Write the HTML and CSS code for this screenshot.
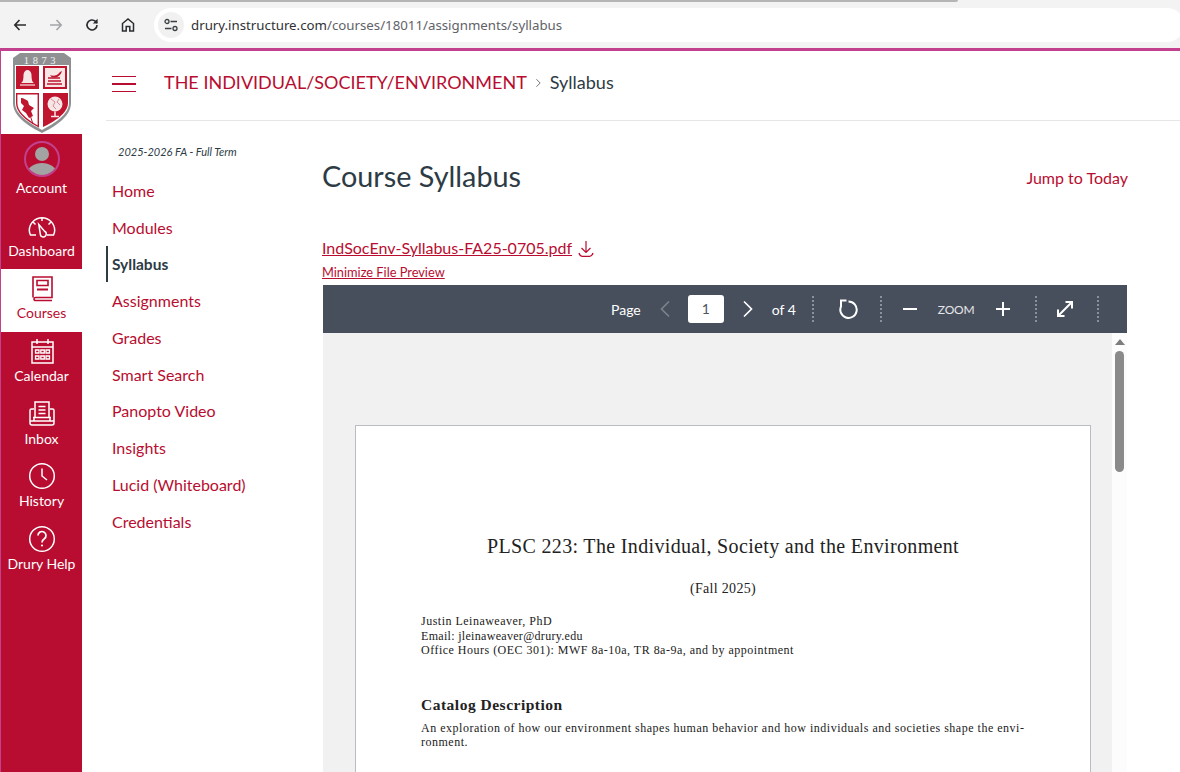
FILE: index.html
```html
<!DOCTYPE html>
<html lang="en">
<head>
   <meta charset="UTF-8">
   <meta name="viewport" content="width=device-width, initial-scale=1.0">
   <title>Course Syllabus</title>
   <link rel="stylesheet" href="styles.css">
</head>
<body>
   <div class="chrome">
       <div class="chrome-tabline"></div>
       <div class="chrome-bar">
           <svg class="chrome-btn" viewBox="0 0 16 16"><path d="M14 8H3M7.500 3 2.800 8l4.700 5" fill="none" stroke="#2a2c2f" stroke-width="1.600"/></svg>
           <svg class="chrome-btn" viewBox="0 0 16 16"><path d="M2 8h11M8.500 3l4.700 5-4.700 5" fill="none" stroke="#a3a5a8" stroke-width="1.600"/></svg>
           <svg class="chrome-btn" viewBox="0 0 16 16"><path d="M13 8a5 5 0 1 1-1.500-3.600L13 6" fill="none" stroke="#2a2c2f" stroke-width="1.600"/><path d="M13.600 1.800v4.800H8.800z" fill="#2a2c2f"/></svg>
           <svg class="chrome-btn" viewBox="0 0 16 16"><path d="M2.500 14V6.500L8 2l5.500 4.500V14H9.800V9.500H6.200V14z" fill="none" stroke="#2a2c2f" stroke-width="1.500"/></svg>
           <div class="omnibox">
               <span class="site-icon">
                   <svg viewBox="0 0 16 16" width="16" height="16"><path d="M7.500 4.500H14M2 11.500h6.500" fill="none" stroke="#3c3f43" stroke-width="1.300"/><circle cx="4" cy="4.500" r="2" fill="none" stroke="#3c3f43" stroke-width="1.300"/><circle cx="12" cy="11.500" r="2" fill="none" stroke="#3c3f43" stroke-width="1.300"/></svg>
               </span>
               <span class="url"><span class="url-host">drury.instructure.com</span>/courses/18011/assignments/syllabus</span>
           </div>
       </div>
   </div>

   <div class="page">
       <nav class="rail">
           <a class="rail-logo" href="#">
               <svg viewBox="0 0 60 82" width="60" height="82">
                   <path d="M1 7 8 2h44l7 5v45c0 14-17 24-29 30C18 76 1 66 1 52z" fill="#8f9092"/>
                   <text x="29.500" y="13" class="logo-year">1873</text>
                   <path d="M3 14h54v38c0 12-16 21-27 27C19 73 3 64 3 52z" fill="#fff"/>
                   <path d="M4 15h23v23H4zM31 15h24v23H31z" fill="#c0152f"/>
                   <path d="M33 17h20v19H33z" fill="#f6e6e6"/>
                   <path d="M31 42h25v10c0 10-14 19-25 24z" fill="#c0152f"/>
                   <path d="M4.700 42.700h21.600v32.800C17 70.500 4.700 63 4.700 52z" fill="#fff" stroke="#c0152f" stroke-width="1.400"/>
                   <path d="M9 32c2-1 2.500-4 2.500-8 0-3 2-5 4-5s4 2 4 5c0 4 .5 7 2.500 8z" fill="#f6e6e6"/>
                   <path d="M8 34h15" stroke="#f6e6e6" stroke-width="1.200"/>
                   <path d="M35 33h15M36 30h13M36 27h12" stroke="#c0152f" stroke-width="1.500"/>
                   <path d="M38 24c3 1.500 7 1 10-3l2-1c-1 4-4 6-6 6.500h-4z" fill="#c0152f"/>
                   <path d="M9 47c3 0 5 2 7 3l1 4 5 3-3 3 2 5-4 2-3-5-4-3 2-4-3-3z" fill="#c0152f"/>
                   <path d="M18 64l3 9" stroke="#c0152f" stroke-width="1"/>
                   <circle cx="43" cy="53" r="7.500" fill="#f6e6e6"/>
                   <path d="M39 48l4 3-2 4 3 3M47 48l-2 3 3 3" fill="none" stroke="#d98a96" stroke-width="1"/>
                   <path d="M43 60.500V65M39 65.500h8" stroke="#f6e6e6" stroke-width="1.500"/>
               </svg>
           </a>
           <a class="rail-item account" href="#">
               <span class="avatar">
                   <svg viewBox="0 0 32 32" width="32" height="32"><circle cx="16" cy="11" r="7" fill="#a3a3a3"/><path d="M0 32c1-8 9-12 16-12s15 4 16 12z" fill="#a3a3a3"/></svg>
               </span>
               Account
           </a>
           <a class="rail-item" href="#">
               <svg class="rail-icon" viewBox="0 0 28 28"><path d="M8 23H2.500C1.800 21.500 1.300 20 1.300 18.500A12.700 12.700 0 0 1 26.700 18.500C26.700 20 26.200 21.500 25.500 23H19M14 5.800V9M5 10l2.500 2.500M23 10l-2.500 2.500" fill="none" stroke="#fff" stroke-width="1.500"/><path d="M10.800 12.500l5.700 6.700a3 3 0 1 1-4.200 3z" fill="none" stroke="#fff" stroke-width="1.500"/></svg>
               Dashboard
           </a>
           <a class="rail-item active" href="#">
               <svg class="rail-icon" viewBox="0 0 28 28"><path d="M5 23.500V3h19v20.500H7.500a1.500 1.500 0 0 0 0 3H24" fill="none" stroke="#b80d30" stroke-width="1.600"/><path d="M9 6.500h11v5H9z" fill="none" stroke="#b80d30" stroke-width="1.600"/><path d="M9 15.500h11" stroke="#b80d30" stroke-width="2"/></svg>
               Courses
           </a>
           <a class="rail-item" href="#">
               <svg class="rail-icon" viewBox="0 0 28 28"><path d="M4 5h21v21H4zM4 10h21M9 2v5M20 2v5" fill="none" stroke="#fff" stroke-width="1.500"/><path d="M7.500 13H11v3H7.500zM12.800 13h3.500v3h-3.500zM18 13h3.500v3H18zM7.500 19H11v3H7.500zM12.800 19h3.500v3h-3.500zM18 19h3.500v3H18z" fill="none" stroke="#fff" stroke-width="1.300"/></svg>
               Calendar
           </a>
           <a class="rail-item" href="#">
               <svg class="rail-icon" viewBox="0 0 28 28"><path d="M7 17V2h14v15" fill="none" stroke="#fff" stroke-width="1.500"/><path d="M10.500 6.500h7M10.500 10h7M10.500 13.500h7" stroke="#fff" stroke-width="1.500"/><path d="M6 9H3.500A1.500 1.500 0 0 0 2 10.500V23a2 2 0 0 0 2 2h20a2 2 0 0 0 2-2V10.500A1.500 1.500 0 0 0 24.500 9H22M2 21h24M6 17.500V21M22 17.500V21M5 17.500h18" fill="none" stroke="#fff" stroke-width="1.500"/></svg>
               Inbox
           </a>
           <a class="rail-item" href="#">
               <svg class="rail-icon" viewBox="0 0 28 28"><circle cx="14" cy="14" r="12.300" fill="none" stroke="#fff" stroke-width="1.500"/><path d="M14 6.500V14l5 4" fill="none" stroke="#fff" stroke-width="1.500"/></svg>
               History
           </a>
           <a class="rail-item" href="#">
               <svg class="rail-icon" viewBox="0 0 28 28"><circle cx="14" cy="14" r="12.300" fill="none" stroke="#fff" stroke-width="1.500"/><path d="M10 10.500a4 4 0 1 1 6.300 3.300c-1.500 1-2.300 1.700-2.300 3.700" fill="none" stroke="#fff" stroke-width="1.700"/><circle cx="14" cy="20.500" r="1.100" fill="#fff"/></svg>
               Drury Help
           </a>
       </nav>

       <div class="main">
           <header class="crumbs">
               <button class="burger" aria-label="Menu"><span></span><span></span><span></span></button>
               <a class="crumb-link" href="#">THE INDIVIDUAL/SOCIETY/ENVIRONMENT</a>
               <svg class="crumb-sep" viewBox="0 0 8 12" width="7" height="10"><path d="M1.500 1.500 6 6l-4.500 4.500" fill="none" stroke="#6b7780" stroke-width="1.200"/></svg>
               <span class="crumb-here">Syllabus</span>
           </header>

           <div class="content">
               <aside class="course-nav">
                   <div class="term">2025-2026 FA - Full Term</div>
                   <ul class="course-links">
                       <li><a href="#">Home</a></li>
                       <li><a href="#">Modules</a></li>
                       <li class="current"><a href="#">Syllabus</a></li>
                       <li><a href="#">Assignments</a></li>
                       <li><a href="#">Grades</a></li>
                       <li><a href="#">Smart Search</a></li>
                       <li><a href="#">Panopto Video</a></li>
                       <li><a href="#">Insights</a></li>
                       <li><a href="#">Lucid (Whiteboard)</a></li>
                       <li><a href="#">Credentials</a></li>
                   </ul>
               </aside>

               <section class="syllabus">
                   <div class="title-row">
                       <h1>Course Syllabus</h1>
                       <a class="jump" href="#">Jump to Today</a>
                   </div>
                   <div class="file-row">
                       <a class="file-link" href="#">IndSocEnv-Syllabus-FA25-0705.pdf</a>
                       <svg class="file-icon" viewBox="0 0 16 17" width="16" height="17"><path d="M8 1v11M3.500 8 8 12.500 12.500 8M1 13c.5 2 2 3.300 3.500 3.300h7c1.500 0 3-1.300 3.500-3.300" fill="none" stroke="#b80d30" stroke-width="1.200"/></svg>
                   </div>
                   <a class="minimize" href="#">Minimize File Preview</a>

                   <div class="viewer">
                       <div class="toolbar">
                           <span class="tb-label">Page</span>
                           <svg class="tb-chev" viewBox="0 0 12 18" width="12" height="18"><path d="M10 1.500 2.500 9l7.500 7.500" fill="none" stroke="#7c828b" stroke-width="1.700"/></svg>
                           <span class="page-box">1</span>
                           <svg class="tb-next" viewBox="0 0 12 18" width="12" height="18"><path d="M2 1.500 9.500 9 2 16.500" fill="none" stroke="#fff" stroke-width="1.700"/></svg>
                           <span class="tb-label">of 4</span>
                           <span class="tb-rule rule-a"></span>
                           <svg viewBox="0 0 20 20" width="20" height="20"><path d="M10.500 2.500a8.200 8.200 0 1 1-7.200 4.300" fill="none" stroke="#fff" stroke-width="2"/><path d="M3 7.500V1.500H8.500" fill="none" stroke="#fff" stroke-width="2"/></svg>
                           <span class="tb-rule rule-b"></span>
                           <svg viewBox="0 0 16 16" width="16" height="16"><path d="M1 8h14" stroke="#fff" stroke-width="2"/></svg>
                           <span class="zoom-label">ZOOM</span>
                           <svg viewBox="0 0 16 16" width="16" height="16"><path d="M1 8h14M8 1v14" stroke="#fff" stroke-width="2"/></svg>
                           <span class="tb-rule rule-c"></span>
                           <svg viewBox="0 0 18 18" width="18" height="18"><path d="M2 16 16 2M9.500 2H16v6.500M2 9.500V16h6.500" fill="none" stroke="#fff" stroke-width="2"/></svg>
                           <span class="tb-rule rule-d"></span>
                       </div>
                       <div class="stage">
                           <div class="pdf-area">
                               <div class="sheet">
                                   <h2 class="doc-title">PLSC 223: The Individual, Society and the Environment</h2>
                                   <p class="doc-term">(Fall 2025)</p>
                                   <p class="doc-meta">Justin Leinaweaver, PhD<br><span class="doc-email">Email: jleinaweaver@drury.edu</span><br>Office Hours (OEC 301): MWF 8a-10a, TR 8a-9a, and by appointment</p>
                                   <h3 class="doc-head">Catalog Description</h3>
                                   <p class="doc-body">An exploration of how our environment shapes human behavior and how individuals and societies shape the envi-<br>ronment.</p>
                               </div>
                           </div>
                           <div class="scroll-track">
                               <span class="scroll-up"></span>
                               <span class="scroll-thumb"></span>
                           </div>
                       </div>
                   </div>
               </section>
           </div>
       </div>
   </div>
</body>
</html>
```

FILE: styles.css
```css
html, body {
    margin: 0;
    height: 772px;
    overflow: hidden;
}

body {
    font-family: "Lato", "Liberation Sans", sans-serif;
    background: #fff;
    color: #2d3b45;
    display: flex;
    flex-direction: column;
}

a {
    color: #b80d30;
    text-decoration: none;
}

/* browser bar */
.chrome {
    height: 48px;
    flex: none;
    background: #f3f3f3;
    border-bottom: 3px solid #c2408e;
}

.chrome-tabline {
    height: 2px;
    width: 958px;
    background: #b5b5b5;
    border-radius: 0 0 6px 0;
}

.chrome-bar {
    display: flex;
    align-items: center;
    height: 46px;
    padding-left: 12px;
}

.chrome-btn {
    width: 16px;
    height: 16px;
    margin-right: 20px;
}

.omnibox {
    display: flex;
    align-items: center;
    flex: 1;
    height: 34px;
    margin-left: -2px;
    margin-right: -4px;
    padding-left: 4px;
    background: #fff;
    border-radius: 17px;
    color: #5f6368;
    font-family: "Noto Sans", sans-serif;
    font-size: 13.270px;
}

.site-icon {
    display: flex;
    align-items: center;
    justify-content: center;
    width: 26px;
    height: 26px;
    margin-right: 7px;
    border-radius: 50%;
    background: #f1f1f1;
}

.url-host {
    color: #303134;
}

/* page */
.page {
    flex: 1;
    display: flex;
    min-height: 0;
}

.rail {
    width: 81px;
    flex: none;
    border-left: 1px solid #c2408e;
    background: #b80d30;
    display: flex;
    flex-direction: column;
    align-items: stretch;
}

.rail-logo {
    height: 83px;
    display: flex;
    justify-content: center;
    background: #fff;
    overflow: hidden;
    flex: none;
}

.logo-year {
    fill: #f0f0f0;
    font-family: "Liberation Serif", serif;
    font-size: 10.500px;
    letter-spacing: 3.600px;
    text-anchor: middle;
}

.rail-item {
    height: 62.700px;
    display: flex;
    flex-direction: column;
    align-items: center;
    justify-content: flex-end;
    padding-bottom: 10.300px;
    box-sizing: border-box;
    color: #fff;
    font-size: 14px;
    line-height: 17px;
    gap: 2px;
    flex: none;
}

.rail-item.active {
    background: #fff;
    color: #b80d30;
}

.rail-icon {
    width: 28px;
    height: 28px;
}

.rail-item.account {
    height: 72.300px;
}

.avatar {
    display: block;
    width: 32px;
    height: 32px;
    border: 2px solid #c2408e;
    border-radius: 50%;
    overflow: hidden;
}

.main {
    flex: 1;
    min-width: 0;
    display: flex;
    flex-direction: column;
}

.crumbs {
    height: 70px;
    margin-left: 24px;
    flex: none;
    display: flex;
    align-items: center;
    border-bottom: 1px solid #e4e6e8;
    padding-bottom: 7px;
    box-sizing: border-box;
}

.burger {
    display: flex;
    flex-direction: column;
    gap: 6px;
    width: 24px;
    margin: 4px 28px 0 6px;
    padding: 0;
    border: 0;
    background: none;
}

.burger span {
    display: block;
    height: 1.500px;
    background: #b80d30;
}

.crumb-link {
    font-size: 18px;
}

.crumb-sep {
    margin: 2px 8px 0 8px;
}

.crumb-here {
    font-size: 18px;
    color: #2d3b45;
}

.content {
    flex: 1;
    display: flex;
    min-height: 0;
}

/* course navigation */
.course-nav {
    width: 216px;
    margin-left: 24px;
    flex: none;
}

.term {
    margin: 24px 0 0 12px;
    font-size: 11px;
    line-height: 14px;
    font-style: italic;
    color: #2d3b45;
}

.course-links {
    list-style: none;
    margin: 13px 0 0;
    padding: 0;
}

.course-links li {
    height: 36.750px;
    display: flex;
    align-items: center;
    padding-left: 6px;
    font-size: 16px;
}

.course-links .current {
    border-left: 2px solid #2d3b45;
    padding-left: 4px;
    font-size: 15.500px;
    font-weight: 700;
}

.course-links .current a {
    color: #2d3b45;
}

/* syllabus */
.syllabus {
    flex: 1;
    min-width: 0;
    padding-right: 53px;
}

.title-row {
    display: flex;
    justify-content: space-between;
    align-items: center;
    padding-top: 37px;
}

h1 {
    margin: 0;
    font-size: 28.800px;
    font-weight: 400;
    line-height: 36px;
    color: #2d3b45;
}

.jump {
    margin: 2px -1px 0 0;
    font-size: 16px;
}

.file-row {
    display: flex;
    align-items: center;
    gap: 6px;
    margin-top: 41px;
    height: 24px;
}

.file-link {
    font-size: 16px;
    text-decoration: underline;
}

.file-icon {
    margin-top: 2px;
}

.minimize {
    display: block;
    margin-top: 5px;
    font-size: 12.800px;
    line-height: 16px;
    text-decoration: underline;
}

.viewer {
    margin: 5px 0 0 1px;
}

.toolbar {
    height: 48px;
    display: flex;
    align-items: center;
    background: #484f5c;
    color: #fff;
    padding-left: 288px;
}

.tb-label {
    font-size: 14px;
    color: #fff;
}

.tb-chev {
    margin: 0 17px 0 18px;
}

.tb-next {
    margin: 0 18px;
}

.page-box {
    width: 36px;
    height: 28px;
    background: #fff;
    border-radius: 3px;
    color: #50565f;
    font-size: 14px;
    line-height: 28px;
    text-align: center;
}

.tb-rule {
    width: 0;
    height: 26px;
    border-left: 2px dotted #8b919a;
}

.rule-a {
    margin-left: 16px;
    margin-right: 24px;
}

.rule-b {
    margin-left: 22px;
    margin-right: 20px;
}

.zoom-label {
    margin: 0 21px 0 20px;
    font-size: 12px;
    letter-spacing: -0.200px;
    color: #e4e6e9;
}

.rule-c {
    margin-left: 24px;
    margin-right: 19px;
}

.rule-d {
    margin-left: 23px;
}

.stage {
    display: flex;
    height: 439px;
    overflow: hidden;
}

.pdf-area {
    flex: 1;
    background: #f1f1f1;
    padding: 92px 21px 0 32px;
    min-width: 0;
}

.sheet {
    height: 500px;
    background: #fff;
    border: 1px solid #b9bcc0;
    padding: 0 65px;
    font-family: "Liberation Serif", "DejaVu Serif", serif;
    color: #222;
    text-align: left;
}

.doc-title {
    margin: 106px 0 0;
    text-align: center;
    font-size: 20px;
    font-weight: 400;
    line-height: 28px;
    letter-spacing: 0.340px;
}

.doc-term {
    margin: 19px 0 0;
    text-align: center;
    font-size: 14px;
    line-height: 20px;
    letter-spacing: 0.300px;
}

.doc-meta {
    margin: 15px 0 0;
    font-size: 12px;
    line-height: 14.500px;
    letter-spacing: 0.490px;
}

.doc-email {
    letter-spacing: 0.310px;
}

.doc-head {
    margin: 38px 0 0;
    font-size: 15.500px;
    line-height: 18px;
    letter-spacing: 0.500px;
}

.doc-body {
    margin: 7px 0 0;
    font-size: 12px;
    line-height: 14.500px;
    letter-spacing: 0.510px;
    white-space: nowrap;
}

.scroll-track {
    width: 15px;
    flex: none;
    background: #fcfcfc;
}

.scroll-up {
    display: block;
    width: 0;
    margin: 6px auto 0;
    border: 5px solid transparent;
    border-top: 0;
    border-bottom: 6px solid #7d7d7d;
}

.scroll-thumb {
    display: block;
    width: 9px;
    height: 121px;
    margin: 6px auto 0;
    background: #8a8a8a;
    border-radius: 5px;
}
```
